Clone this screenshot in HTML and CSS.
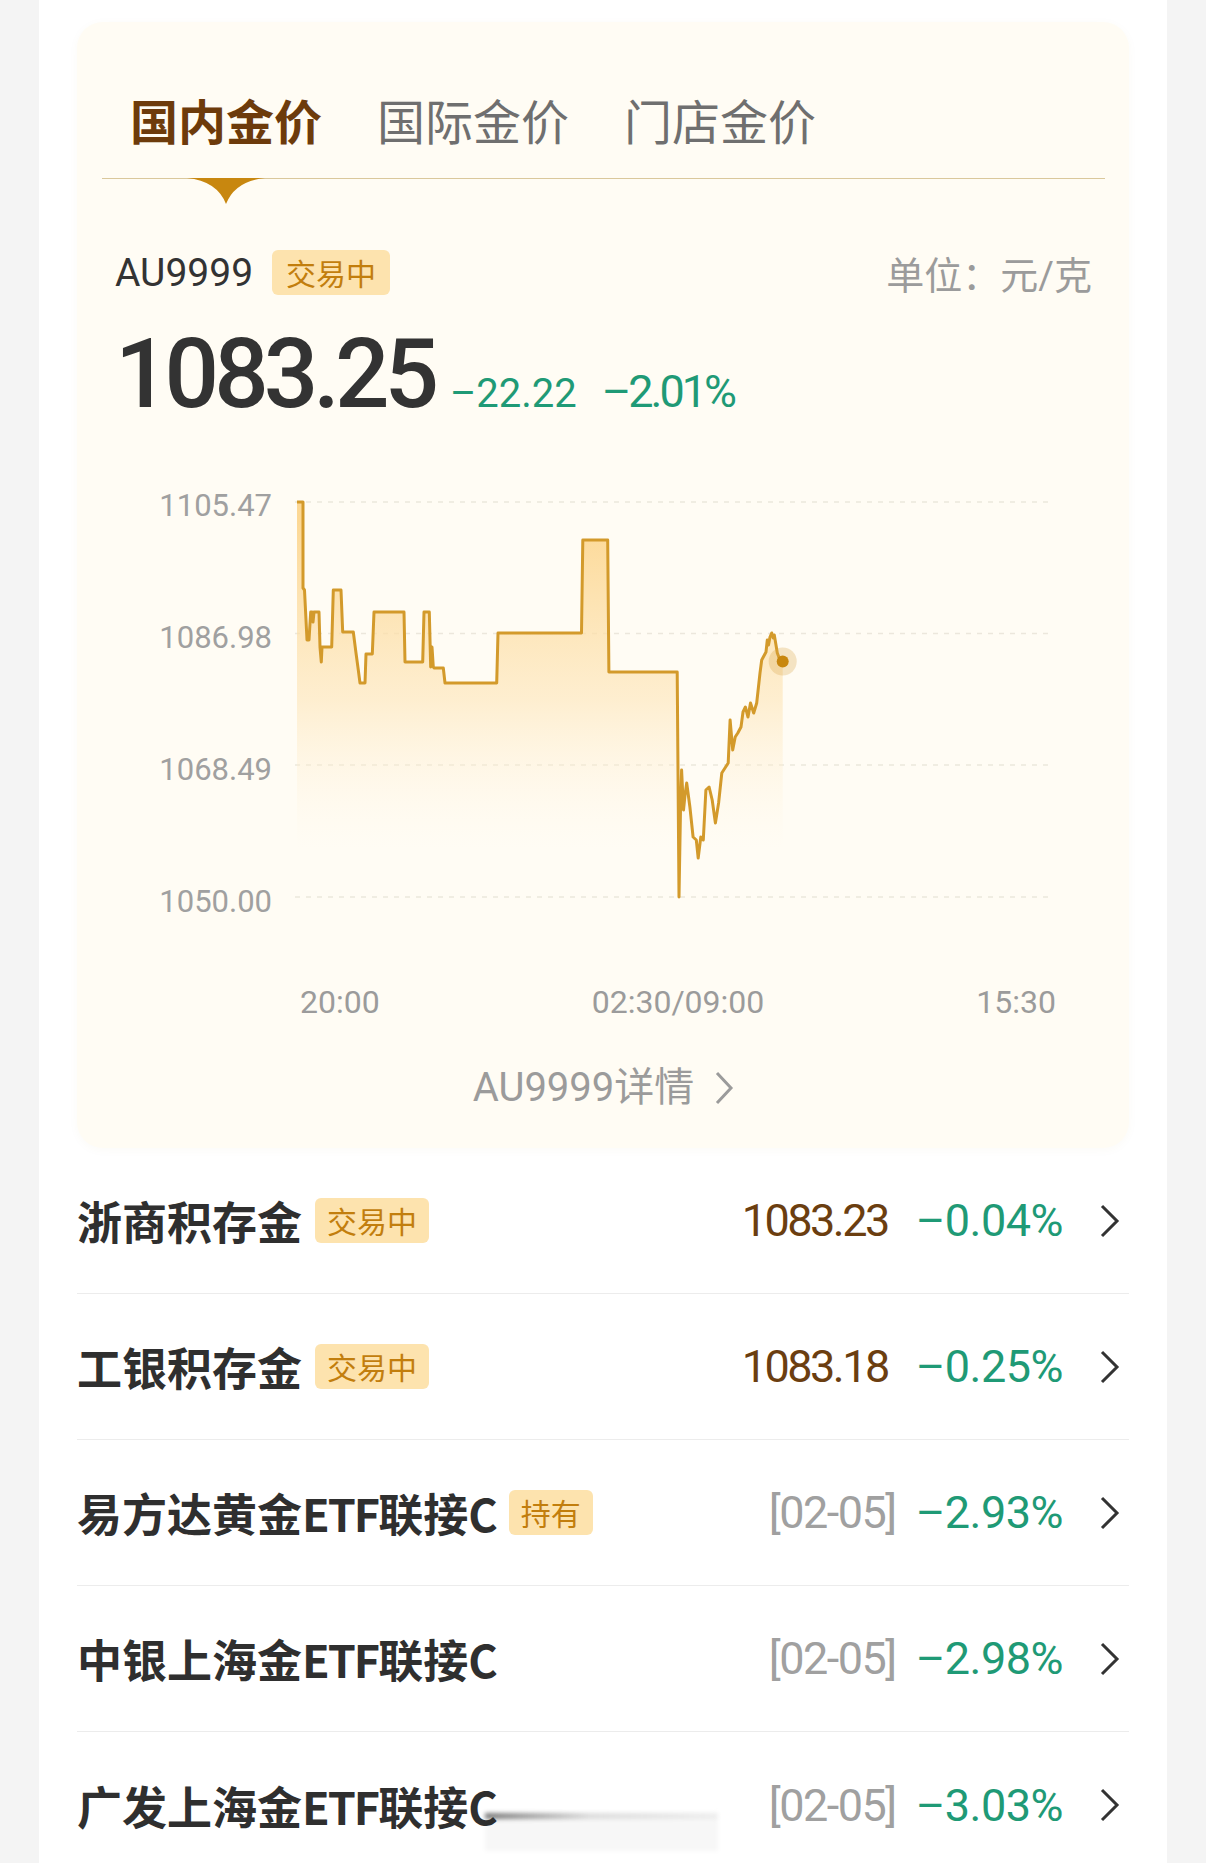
FILE: index.html
```html
<!DOCTYPE html>
<html lang="zh-CN">
<head>
    <meta charset="UTF-8">
    <meta name="viewport" content="width=device-width, initial-scale=1.0">
    <title>金价</title>
    <link rel="stylesheet" href="styles.css">
</head>
<body>
    <div class="page">
        <div class="card">
            <div class="tabs">
                <div class="tab active">
                    国内金价
                    <svg class="tab-mark" width="78" height="26" viewBox="0 0 78 26">
                        <path d="M0 0 H78 Q48 3 39 26 Q30 3 0 0 Z" fill="#c8870f"/>
                    </svg>
                </div>
                <div class="tab">国际金价</div>
                <div class="tab">门店金价</div>
            </div>

            <div class="quote-head">
                <div class="quote-name">
                    <span class="code">AU9999</span>
                    <span class="tag">交易中</span>
                </div>
                <span class="unit">单位：元/克</span>
            </div>

            <div class="quote-price">
                <span class="big-price">1083.25</span>
                <span class="change">–22.22</span>
                <span class="change pct">–2.01%</span>
            </div>

            <div class="chart">
                <div class="y-axis">
                    <span>1105.47</span>
                    <span>1086.98</span>
                    <span>1068.49</span>
                    <span>1050.00</span>
                </div>
                <svg class="plot" width="770" height="415" viewBox="290 491 770 415">
                    <defs>
                        <linearGradient id="fill" gradientUnits="userSpaceOnUse" x1="0" y1="520" x2="0" y2="850">
                            <stop offset="0" stop-color="#fcd48a" stop-opacity="0.9"/>
                            <stop offset="0.55" stop-color="#fde5b8" stop-opacity="0.6"/>
                            <stop offset="1" stop-color="#fff6e4" stop-opacity="0"/>
                        </linearGradient>
                    </defs>
                    <g class="grid">
                        <line x1="295" y1="502" x2="1050" y2="502"/>
                        <line x1="295" y1="633.5" x2="1050" y2="633.5"/>
                        <line x1="295" y1="765" x2="1050" y2="765"/>
                        <line x1="295" y1="897" x2="1050" y2="897"/>
                    </g>
                    <path class="area" d="M297,502 H303 V588 L304.5,590 L307,640 H309 L310.7,612 H312 L313,622 L314,612 H319 L320,647 L321.3,662 L322,647 H331.7 L333.3,590 H341 L342.7,632 H353.3 L356,653 L358.3,670 L360,683 H365 L366,654 H372.3 L374,612 H404 L405,662 H422.7 L424,612 H429.3 L430.7,667 L432,647 L433.3,667 L434,668 H443.3 L445,683 H496.7 L498,633 H581.5 L582.8,540 H607.7 L608.9,672 H677.2 L679,850 L680.5,810 L681.6,770 L683.5,810 L685,795 L686.7,783 L689.9,807 L693.1,837 L696.3,840 L698.2,850 L700.8,837 L703.3,840 L705.9,790 L709.1,787 L712.2,800 L715.4,823 L718.6,803 L721.8,773 L725,768 L728.2,763 L730.1,720 L732.7,750 L735.2,737 L737.8,733 L741,727 L743,712 L745.4,707 L748,717 L750.5,703 L753.7,713 L756.7,703 L760,673 L761.7,660 L766,652 L767.3,640 L768.5,645 L770,637 L771.7,633 L773.3,638 L774.3,635 L776,645 L777.3,653 L780,660 L782.7,662 L782.7,850 L297,850 Z" fill="url(#fill)"/>
                    <path class="line" d="M297,502 H303 V588 L304.5,590 L307,640 H309 L310.7,612 H312 L313,622 L314,612 H319 L320,647 L321.3,662 L322,647 H331.7 L333.3,590 H341 L342.7,632 H353.3 L356,653 L358.3,670 L360,683 H365 L366,654 H372.3 L374,612 H404 L405,662 H422.7 L424,612 H429.3 L430.7,667 L432,647 L433.3,667 L434,668 H443.3 L445,683 H496.7 L498,633 H581.5 L582.8,540 H607.7 L608.9,672 H677.2 L679,897 L680.5,810 L681.6,770 L683.5,810 L685,795 L686.7,783 L689.9,807 L693.1,837 L696.3,840 L698.2,858 L700.8,837 L703.3,840 L705.9,790 L709.1,787 L712.2,800 L715.4,823 L718.6,803 L721.8,773 L725,768 L728.2,763 L730.1,720 L732.7,750 L735.2,737 L737.8,733 L741,727 L743,712 L745.4,707 L748,717 L750.5,703 L753.7,713 L756.7,703 L760,673 L761.7,660 L766,652 L767.3,640 L768.5,645 L770,637 L771.7,633 L773.3,638 L774.3,635 L776,645 L777.3,653 L780,660 L782.7,662"/>
                    <circle cx="782.7" cy="661.5" r="14" fill="#d9a040" fill-opacity="0.28"/>
                    <circle cx="782.7" cy="661.5" r="6" fill="#c8870f"/>
                </svg>
            </div>

            <div class="x-axis">
                <span>20:00</span>
                <span>02:30/09:00</span>
                <span>15:30</span>
            </div>

            <div class="detail">
                <span>AU9999详情</span>
                <svg width="20" height="34" viewBox="0 0 20 34">
                    <polyline points="3,2 17,17 3,32" fill="none" stroke="#9b9b9b" stroke-width="3"/>
                </svg>
            </div>
        </div>

        <div class="list">
            <div class="row">
                <div class="row-name">
                    <span class="name">浙商积存金</span>
                    <span class="tag">交易中</span>
                </div>
                <div class="row-value">
                    <span class="price">1083.23</span>
                    <span class="pct">–0.04%</span>
                    <svg class="arrow" width="20" height="34" viewBox="0 0 20 34"><polyline points="2,2 17,17 2,32"/></svg>
                </div>
            </div>
            <div class="row">
                <div class="row-name">
                    <span class="name">工银积存金</span>
                    <span class="tag">交易中</span>
                </div>
                <div class="row-value">
                    <span class="price">1083.18</span>
                    <span class="pct">–0.25%</span>
                    <svg class="arrow" width="20" height="34" viewBox="0 0 20 34"><polyline points="2,2 17,17 2,32"/></svg>
                </div>
            </div>
            <div class="row">
                <div class="row-name">
                    <span class="name">易方达黄金<span class="latin">ETF</span>联接<span class="latin">C</span></span>
                    <span class="tag">持有</span>
                </div>
                <div class="row-value">
                    <span class="date">[02-05]</span>
                    <span class="pct">–2.93%</span>
                    <svg class="arrow" width="20" height="34" viewBox="0 0 20 34"><polyline points="2,2 17,17 2,32"/></svg>
                </div>
            </div>
            <div class="row">
                <div class="row-name">
                    <span class="name">中银上海金<span class="latin">ETF</span>联接<span class="latin">C</span></span>
                </div>
                <div class="row-value">
                    <span class="date">[02-05]</span>
                    <span class="pct">–2.98%</span>
                    <svg class="arrow" width="20" height="34" viewBox="0 0 20 34"><polyline points="2,2 17,17 2,32"/></svg>
                </div>
            </div>
            <div class="row last">
                <div class="row-name">
                    <span class="name">广发上海金<span class="latin">ETF</span>联接<span class="latin">C</span></span>
                </div>
                <div class="row-value">
                    <span class="date">[02-05]</span>
                    <span class="pct">–3.03%</span>
                    <svg class="arrow" width="20" height="34" viewBox="0 0 20 34"><polyline points="2,2 17,17 2,32"/></svg>
                </div>
                <div class="smudge"></div>
            </div>
        </div>
    </div>
</body>
</html>
```

FILE: styles.css
```css
* {
    margin: 0;
    padding: 0;
    box-sizing: border-box;
}

body {
    font-family: Roboto, "Noto Sans CJK SC", sans-serif;
    background-color: #f4f4f4;
    color: #333333;
}

.page {
    width: 1128px;
    min-height: 1863px;
    margin: 0 auto;
    padding: 22px 38px 0 38px;
    background: #ffffff;
}

/* top card */
.card {
    background: #fffcf4;
    border-radius: 26px;
    padding: 0 24px 38px 25px;
    box-shadow: 0 2px 10px rgba(160, 130, 60, 0.04);
}

.tabs {
    display: flex;
    gap: 55px;
    padding: 73px 0 0 28px;
    border-bottom: 1px solid #dac89c;
}

.tab {
    position: relative;
    font-family: "Noto Sans CJK SC", sans-serif;
    font-size: 48px;
    line-height: 48px;
    padding-bottom: 35px;
    color: #6f6f6f;
}

.tab.active {
    color: #6d3b0b;
    font-weight: 700;
}

.tab-mark {
    position: absolute;
    top: 100%;
    left: 50%;
    transform: translateX(-50%);
}

.quote-head {
    display: flex;
    justify-content: space-between;
    align-items: center;
    margin-top: 71px;
    padding: 0 13px;
    height: 45px;
}

.quote-name {
    display: flex;
    align-items: center;
    gap: 19px;
}

.code {
    font-size: 39px;
    color: #333333;
}

.tag {
    display: inline-block;
    height: 45px;
    line-height: 45px;
    padding: 0 12px;
    border-radius: 6px;
    background: #fde3ae;
    color: #c27e0d;
    font-family: "Noto Sans CJK SC", sans-serif;
    font-size: 30px;
    font-weight: 400;
}

.quote-name .tag {
    padding: 0 14px;
}

.unit {
    font-size: 38px;
    color: #9b9b9b;
}

.quote-price {
    display: flex;
    align-items: baseline;
    margin-top: 31px;
    padding: 0 13px;
    height: 96px;
}

.big-price {
    font-size: 96px;
    line-height: 96px;
    font-weight: 500;
    letter-spacing: -5px;
    color: #333333;
    margin-right: 16px;
}

.change {
    font-size: 40px;
    color: #1f9a76;
}

.change.pct {
    margin-left: 25px;
    letter-spacing: -3px;
}

/* chart */
.chart {
    display: flex;
    margin-top: 69px;
    height: 426px;
}

.y-axis {
    width: 188px;
    padding-right: 18px;
    display: flex;
    flex-direction: column;
    justify-content: space-between;
    align-items: flex-end;
}

.y-axis span {
    font-size: 31px;
    line-height: 30px;
    color: #a0a0a0;
}

.plot {
    display: block;
}

.grid line {
    stroke: #ece7dc;
    stroke-width: 1.5;
    stroke-dasharray: 5 6;
}

.line {
    fill: none;
    stroke: #d39a2b;
    stroke-width: 3;
    stroke-linejoin: round;
}

.x-axis {
    display: flex;
    justify-content: space-between;
    margin-top: 65px;
    padding: 0 49px 0 198px;
}

.x-axis span {
    font-size: 32px;
    line-height: 40px;
    color: #9b9b9b;
}

.detail {
    display: flex;
    justify-content: center;
    align-items: center;
    gap: 20px;
    margin-top: 44px;
    font-size: 40px;
    line-height: 44px;
    color: #9b9b9b;
}

.detail svg {
    display: block;
}

/* product list */
.row {
    display: flex;
    justify-content: space-between;
    align-items: center;
    height: 146px;
    padding-right: 9px;
    border-bottom: 1px solid #ececec;
}

.row.last {
    position: relative;
    border-bottom: none;
}

.row-name {
    display: flex;
    align-items: center;
    gap: 13px;
}

.name {
    font-family: "Noto Sans CJK SC", sans-serif;
    font-size: 45px;
    font-weight: 700;
    color: #2f2f2f;
}

.name .latin {
    letter-spacing: -2px;
}

.row-value {
    display: flex;
    align-items: center;
}

.price {
    font-size: 45px;
    letter-spacing: -2.5px;
    color: #6b3e10;
    margin-right: 28px;
}

.date {
    font-size: 45px;
    letter-spacing: -1.5px;
    color: #a0a0a0;
    margin-right: 20px;
}

.pct {
    font-size: 45px;
    letter-spacing: -0.5px;
    color: #1f9a76;
    margin-right: 37px;
}

.arrow {
    display: block;
}

.arrow polyline {
    fill: none;
    stroke: #333333;
    stroke-width: 3;
}

.smudge {
    position: absolute;
    left: 408px;
    top: 81px;
    width: 233px;
    height: 38px;
    background:
        linear-gradient(to right, rgba(40, 40, 40, 0.6), rgba(170, 170, 170, 0.35) 45%, rgba(210, 210, 210, 0.25)) top / 100% 6px no-repeat,
        rgba(0, 0, 0, 0.03);
    filter: blur(2px);
}
```
